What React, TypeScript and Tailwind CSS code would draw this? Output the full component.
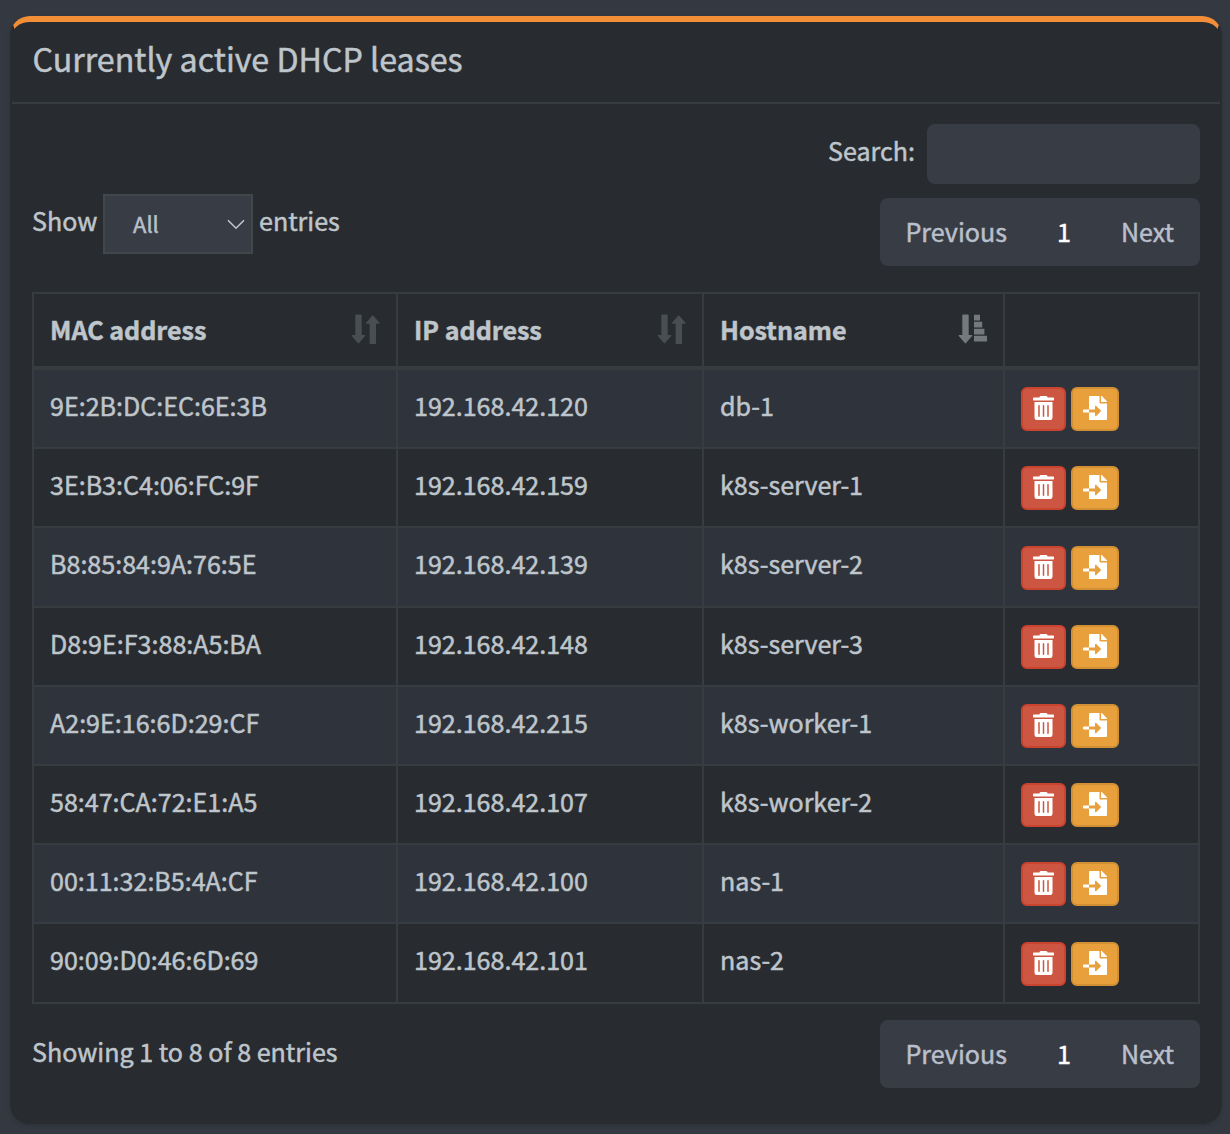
import { FaFileImport, FaTrashAlt } from "react-icons/fa";

const leases = [
  ["9E:2B:DC:EC:6E:3B", "192.168.42.120", "db-1"],
  ["3E:B3:C4:06:FC:9F", "192.168.42.159", "k8s-server-1"],
  ["B8:85:84:9A:76:5E", "192.168.42.139", "k8s-server-2"],
  ["D8:9E:F3:88:A5:BA", "192.168.42.148", "k8s-server-3"],
  ["A2:9E:16:6D:29:CF", "192.168.42.215", "k8s-worker-1"],
  ["58:47:CA:72:E1:A5", "192.168.42.107", "k8s-worker-2"],
  ["00:11:32:B5:4A:CF", "192.168.42.100", "nas-1"],
  ["90:09:D0:46:6D:69", "192.168.42.101", "nas-2"],
];

const DOWN_ARROW = "M5 0.5h5q.7 0 .7.7V21h3q1.2 0 .4 1l-6 7q-.6.8-1.3 0l-6-7q-.8-1 .4-1h3.1V1.2q0-.7.7-.7z";

function SortIcon() {
  return (
    <svg viewBox="0 0 30 30" className="mb-[3px] h-[30px] w-[30px] fill-[#494e52]" aria-hidden="true">
      <path d={DOWN_ARROW} />
      <path d="M19.3 30h5q.7 0 .7-.7V9.8h3q1.2 0 .4-1l-6-7q-.6-.8-1.3 0l-6 7q-.8 1 .4 1h3.1v19.5q0 .7.7.7z" />
    </svg>
  );
}

function SortAscIcon() {
  return (
    <svg viewBox="0 0 30 30" className="mb-[3px] h-[30px] w-[30px] fill-[#74797d]" aria-hidden="true">
      <path d={DOWN_ARROW} />
      <path d="M16 .8h6v5.7h-6zM16 7.8h8.2v5.7H16zM16 14.8h10.4v5.7H16zM16 21.8h13v5.7H16z" />
    </svg>
  );
}

function Pagination() {
  return (
    <nav className="flex h-[68px] w-[320px] items-center rounded-lg bg-[#383c44] pb-0.5 text-[#b9bfcb]">
      <a className="w-[152px] pl-[25.5px]">Previous</a>
      <a className="w-16 text-center text-white">1</a>
      <a className="w-[104px] pl-[25px]">Next</a>
    </nav>
  );
}

const COLUMNS = "grid grid-cols-[364px_306px_301px_195px] border-l-2 border-[#373c41]";
const CELL = "flex border-r-2 border-[#373c41] pl-4";
const HEAD_CELL = "items-center justify-between border-b-4 pr-[15px]";

export default function App() {
  return (
    <div className="h-[1134px] w-[1230px] overflow-hidden bg-[#343941] pt-4 pl-[10px] font-['Noto_Sans_CJK_SC',sans-serif] text-[25.07px] leading-10 text-[#bec5cb] [-webkit-text-stroke:0.5px]">
      <section className="h-[1108px] w-[1212px] rounded-[20px] border-2 border-t-[6px] border-[#282b2f] border-t-[#f28d38] bg-[#282b2f] shadow-[0_2px_4px_rgba(0,0,0,0.12)]">
        <header className="flex h-[82px] items-center border-b-2 border-[#373c41] pb-2 pl-[20.5px]">
          <h3 className="text-[32.2px]">Currently active DHCP leases</h3>
        </header>
        <div className="px-5 pt-5">
          <div className="flex h-[60px] items-center justify-end gap-3">
            <label className="pb-2">Search:</label>
            <input className="h-[60px] w-[273px] rounded-lg bg-[#383c44]" />
          </div>
          <div className="flex justify-between">
            <div className="flex h-20 items-center">
              <span className="w-[71px] pb-2">Show</span>
              <div className="flex h-[60px] w-[150px] items-center justify-between border-2 border-[#42474b] bg-[#383c44] pr-[6px] pl-7 text-[22px] text-[#b9bfcb]">
                <span className="pb-0.5">All</span>
                <svg viewBox="0 0 18 11" className="h-[11px] w-[18px] fill-none stroke-[#bec5cb] stroke-[1.6]" aria-hidden="true">
                  <path d="M1 1.2l8 8 8-8" />
                </svg>
              </div>
              <span className="pb-2 pl-[6px]">entries</span>
            </div>
            <div className="pt-[14px]">
              <Pagination />
            </div>
          </div>
          <div className="mt-[26px] h-[712px] border-t-2 border-[#373c41]">
            <div className={`${COLUMNS} h-[76px] font-bold`}>
              <div className={`${CELL} ${HEAD_CELL}`}><span className="pb-0.5">MAC address</span><SortIcon /></div>
              <div className={`${CELL} ${HEAD_CELL}`}><span className="pb-0.5">IP address</span><SortIcon /></div>
              <div className={`${CELL} ${HEAD_CELL}`}><span className="pb-0.5">Hostname</span><SortAscIcon /></div>
              <div className={`${CELL} ${HEAD_CELL}`} />
            </div>
            {leases.map((row) => (
              <div key={row[0]} className={`${COLUMNS} h-[79.2px] odd:bg-[#282b2f] even:bg-[#2f333c]`}>
                {row.map((value) => (
                  <div key={value} className={`${CELL} border-b-2 pt-[15px]`}>{value}</div>
                ))}
                <div className={`${CELL} gap-[5px] border-b-2 pt-[17.25px]`}>
                  <button className="flex h-11 w-[45px] items-center justify-center rounded-md border-2 border-[#c9432f] bg-[#cd5642] pb-0.5 text-white">
                    <FaTrashAlt className="h-6 w-[21px]" />
                  </button>
                  <button className="flex h-11 w-12 items-center justify-center rounded-md border-2 border-[#d29034] bg-[#e7a03c] pb-0.5 text-white">
                    <FaFileImport className="h-6 w-6" />
                  </button>
                </div>
              </div>
            ))}
          </div>
          <footer className="flex justify-between pt-4">
            <p className="pt-[11px]">Showing 1 to 8 of 8 entries</p>
            <Pagination />
          </footer>
        </div>
      </section>
    </div>
  );
}
